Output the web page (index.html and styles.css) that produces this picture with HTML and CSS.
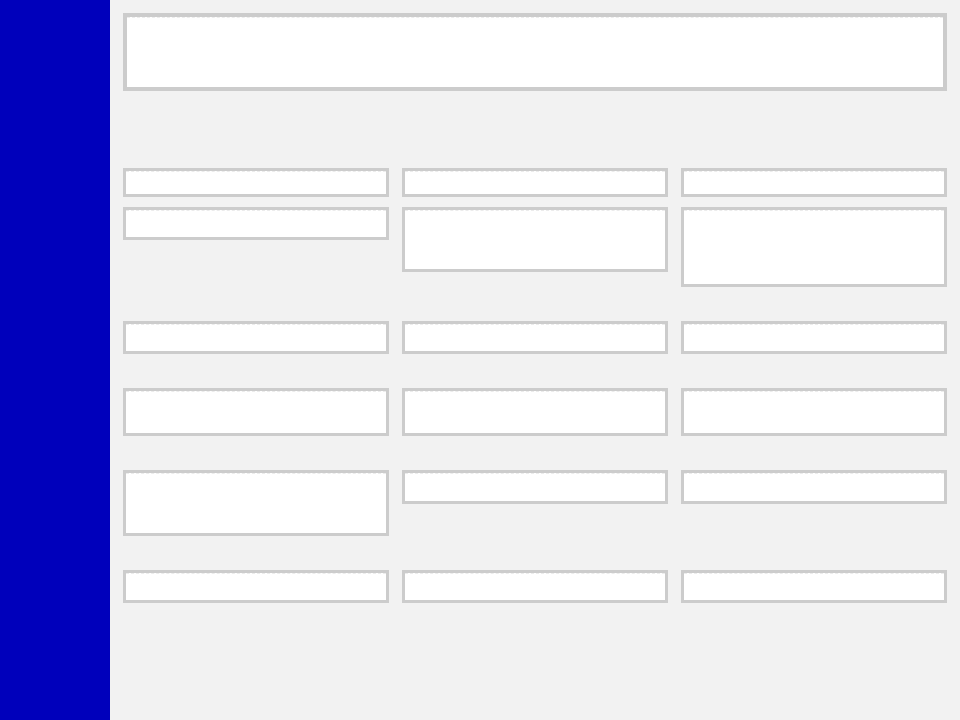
FILE: index.html
```html
<!DOCTYPE html>
<html>
<head>
<meta charset="utf-8">
<link rel="stylesheet" href="styles.css">
</head>
<body>
<aside class="sidebar"></aside>
<main class="main">
  <div class="header box"></div>
  <div class="sections">
    <section class="grid">
      <div class="col">
        <div class="box h29"></div>
        <div class="box h33"></div>
      </div>
      <div class="col">
        <div class="box h29"></div>
        <div class="box h65"></div>
      </div>
      <div class="col">
        <div class="box h29"></div>
        <div class="box h80"></div>
      </div>
    </section>
    <section class="grid">
      <div class="box h33"></div>
      <div class="box h33"></div>
      <div class="box h33"></div>
    </section>
    <section class="grid">
      <div class="box h48"></div>
      <div class="box h48"></div>
      <div class="box h48"></div>
    </section>
    <section class="grid">
      <div class="box h66"></div>
      <div class="box h34"></div>
      <div class="box h34"></div>
    </section>
    <section class="grid">
      <div class="box h33"></div>
      <div class="box h33"></div>
      <div class="box h33"></div>
    </section>
  </div>
</main>
</body>
</html>
```
FILE: styles.css
```css
html, body {
  margin: 0;
  height: 100%;
}
body {
  display: flex;
  height: 720px;
  overflow: hidden;
  font-family: "Liberation Sans", Arial, sans-serif;
}
.sidebar {
  width: 110px;
  flex: none;
  background: #0000bb;
}
.main {
  flex: 1;
  background: #f2f2f2;
  padding: 13px 13px 0 13px;
  display: flex;
  flex-direction: column;
}
.box {
  box-sizing: border-box;
  background: #fff;
  border: 3px solid #cccccc;
}
.box::before {
  content: "";
  display: block;
  border-top: 1px dashed #ececec;
}
.header {
  height: 78px;
  border-width: 4px;
}
.sections {
  margin-top: 77px;
  display: flex;
  flex-direction: column;
  gap: 34px;
}
.grid {
  display: grid;
  grid-template-columns: repeat(3, 1fr);
  column-gap: 13px;
  align-items: start;
}
.col {
  display: flex;
  flex-direction: column;
  gap: 10px;
}
.h29 { height: 29px; }
.h33 { height: 33px; }
.h34 { height: 34px; }
.h48 { height: 48px; }
.h65 { height: 65px; }
.h66 { height: 66px; }
.h80 { height: 80px; }
```
